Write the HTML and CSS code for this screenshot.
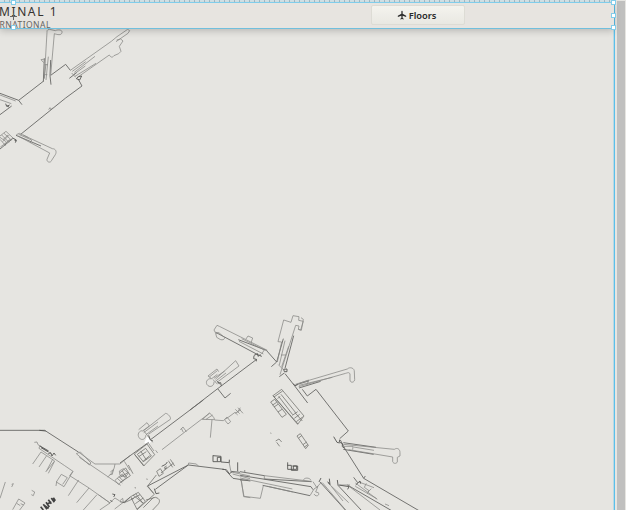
FILE: index.html
```html
<!DOCTYPE html>
<html lang="en">
<head>
<meta charset="utf-8">
<title>Terminal 1 International</title>
<link rel="stylesheet" href="styles.css">
</head>
<body>
<div class="app">
  <main class="canvas">
    <div class="ruler"></div>
    <header class="header">
      <div class="brand"><div class="terminal">MINAL 1</div><div class="subtitle">RNATIONAL</div></div>
      <button class="floors"><svg class="plane" viewBox="0 0 24 24"><path d="M10.500 3.500a1.500 1.500 0 0 1 3 0V9l8.500 5v2.500L13.500 14v5l2.500 2v1.500L12 21.500l-4 1V21l2.500-2v-5L2 16.500V14l8.500-5z"/></svg><span>Floors</span></button>
    </header>
    <svg class="map" viewBox="0 29 614 481">
      <!-- north-west pier -->
      <g transform="translate(0 20) scale(.33333)">
        <path class="wall" d="M0 220l56 21 70-54 5-4M152 166l45-33 14 18M235 178l11 20-49 36-135 109M56 241l10 13M0 284l35-26M0 387l38-31M152 120l-2 47 3 27M130 185l3-70M48 346l75 32M208 175l22-17"/>
        <path class="line" d="M133 175l8-138c-2-8 6-10 12-8l13 3c9-4 22-3 20 6-2 9-14 6-23 3l-11 125M135 117l-12 2 8 9M145 110l-7 70M138 132l-6 45M134 134h10M133 164h9M211 151l123-87 17-14 32-22 6 4-5 8-36 25M223 157l62-48M225 169l63-39M215 159l12 13M231 173l97-68c4 7 9 9 14 2l14-6 7-7-5-15 11-16-7-6-12 3M217 154l40-29M220 164l36-26M0 225l47 18M0 239l34 12M54 348l95 51-8 19c-1 10 12 11 14 3l11-17c5-9 1-18-9-18l-99-46-9 4M56 343l39 17-4 9M70 345l15 8M146 269l4-6 2 6 6-5"/>
        <path class="dark" d="M17 251l3 8 9-4M20 257l7 4M38 354l11 6-3 8M43 360l6 3M229 176l10 4 6-12-9 2z"/>
        <path class="line" d="M0 348l18-14 21 20-38 27M5 345l22 22M12 340l22 20M0 358l17 19M8 365l20-20M0 352l18 13M9 359l15-14M13 373l16-15"/>
      </g>
      <!-- north gates -->
      <g transform="translate(190 305) scale(.33333)">
        <path class="wall" d="M0 315l83-64 117-88M229 136l31 35M285 206l27 34 41 54M337 253l15 20 26-20 97 125M83 251l22 28 17-14M81 228l9 10M260 171l20-70M244 185l16-14M268 215l15-11M145 104l84 32M77 82l132 70M285 190l26-98M319 239l37-11M327 249l65-20"/>
        <path class="line" d="M232 136L88 64l-7-3-9 14 6 11c4-5 9-4 12 0l11 9c8 7-4 12-11 8l-10-6-3-12M168 102l6-9 14 6-5 15M155 101l68 34M147 109l73 38M224 133l-9 14M262 171l13-60-11-1 17-65 22 7 6-20 18 3-1 11 14 3-8 26-7-2 2-10-10-2-47 148M333 38l7 5-6 33-9-3M268 180l17-73M275 185l21-61M273 150h14M265 179l15 15M316 238l156-46c7-7 22-4 21 9l1 23c-1 10-14 10-14 1v-18c-3-7-8-3-13-2l-141 40M328 235l28-10-4 13M327 241l100-24"/>
        <path class="dark" d="M192 151l11-5 1 8 7-5 3 7M192 152l-1 9 8 2v6M281 193l10-1v8h-8zM83 234l9-1 2 10M310 236l5 6 8-3"/>
        <path class="line" d="M76 223l61-56 10 16-66 49M54 213l27-21 5 8M54 213l11 8 17-13M64 221c-15-1-19 14-10 21 8 6 19 0 18-12M68 223l14 14M72 220l32-22M58 216l24-19M76 229l32-25"/>
        <path class="line detail" d="M249 272l26-19 67 80-19 25zM249 272l75 85M252 276l26-18M266 274l42 55M273 268l44 55M263 281l7-7M307 331l16-11M313 340l16-12M319 350l19-14M315 323l22 25M242 291l12-8 35 45-13 9zM248 300l12-8M252 306l12-8M264 321l12-8"/>
      </g>
      <!-- western concourse -->
      <g transform="translate(0 420) scale(.33333)">
        <path class="wall" d="M0 31h134l101 65"/>
        <path class="dark" d="M118 31l19 2"/>
        <path class="line" d="M235 96l50 36h75l30-25M229 101l12-5 32 33-5 6zM238 112l124 84M345 132c-2 17-9 30-22 39M331 156l9-7-3 14-8 1M358 153l12-7 15 14-9 11-16-5zM373 124l17 27M345 181l22-19 10 13-22 18zM351 174l16 15M356 170l14 13M103 67l8-1 3 8 40 28M120 76l-3 9 77 52 25 17M123 96l-25 36M123 96l17 11-23 34M140 107l24 16-27 33M163 125l-18 35M158 118l-18 34M219 154l-27 46-23-14 15-23 18 10-14 20M170 185l-2 13M219 154l-10 13 58 37 28 20 34 24M236 180l-31 47M267 204l-37 44M291 224l-41 46M295 224l35 25-31 21M328 250l17-16 14 9 9-8 2 12-26 20M370 247l20-15M16 186L0 235M35 201l5-10-5 2M95 211l9 5-4 11-6-3M56 237l-18 32M56 237l19 12-16 21M62 251l9 4M50 250l11 7"/>
        <path class="dark" d="M120 78l26 15M123 83l21 12M145 101l7-3 4 10 6-9 5 7M337 222l8 2-4 7M331 240l6 6"/>
        <path class="seats" d="M145 239l9 12M154 234l9 13M138 247l10 14M130 253l11 15M122 260l8 10M143 251l11-5M134 257l12 8M160 233l6 9"/>
      </g>
      <!-- central concourse -->
      <g transform="translate(120 400) scale(.33333)">
        <path class="gap" d="M73 128l8-18 15 11-9 11z"/>
        <path class="wall" d="M0 189l86-62M93 118L250 0M83 258l122-63M106 268l99-73 107 13M0 305l13 3 18-17"/>
        <path class="line" d="M71 92l66-52c7 1 17 12 14 18l-66 45M56 89l25-21 7 10-22 16M66 92c-13 2-15 17-5 25 8 4 16-1 16-11M71 98l43-32M78 104l36-26M71 92l27 35M85 129l17 24M107 151l6 8M126 149l66-51 63-48 14-11 12 13 3 7-38-1M276 59l-5 54M269 39l-20 18M278 45l-20 13M284 60l26 2 11-11 11 14-8 7-10-12M316 58l17-12 12-9 8 8M346 28l13 13M354 23l15 17M345 40l18-11M361 23l-10 15M181 90l8-9 10 14M184 85l6 12"/>
        <path class="line detail" d="M43 162l38-30 23 32-33 34zM52 163l25-18 17 23-24 17zM62 153l17 27M56 170l23-15M68 185l21-18M44 164l29 34M0 218l17-14 14 23-29 20M7 213l15 21M0 232l24-14M25 195l14 26M110 214l11-8 9 14-13 9zM123 219l38-30M145 182l13 20M151 178l13 20M132 203l8-5M109 225l-27 34 18 20M83 258l20 25-53 47M32 290l23-13 21 27-25 24zM39 285l31 25M47 281l21 28M35 297l25-13M46 311l24-17M78 300l28-8c16 4 14 14 8 21l-16 17M101 292l-31 31M13 308l29-13M44 263l4 1M79 237l4 1"/>
        <path class="dark" d="M125 199l12-6 5-7M133 207l7-4M86 106l5 14 8 3M103 266l5 15 10-2M279 166v19h23v-13h-10v12M279 167l24 2v17l25 2v-9M353 187v27M307 208l12 1 9 12 9-6"/>
        <path class="line" d="M204 196l2-7 23 3 7 7"/>
      </g>
      <!-- south-east pier -->
      <g transform="translate(240 380) scale(.33333)">
        <path class="wall" d="M299 176l26-23M301 180l13 25 57 90 166 97M371 295l5-7M341 292l12 16M310 188l98 14M310 208l91 15M0 286l213 34 6 9M0 275l73 12M73 297l142 8M68 316l142 31M240 306l76 84M322 315l133 77M293 315l72 77"/>
        <path class="line" d="M310 193l153 15c9-6 17-1 17 10v10l-8 4v14c-3 6-12 5-14-1v-14l-132-22M310 199h29l-1 10M340 201l62 10M73 285v14M74 287l139 17M190 301c2-9 19-9 23 0M0 294l157 33M83 319l75 17M3 300l9 49 49 6 9-38M0 301h23M219 305l11 17 14-15M210 347l12-20 12-8-7 17 8 2c5 9-8 14-13 4M247 308l70 82M263 308l63 60M274 319l35 44M326 318l94 72M346 309l66 49M346 319l64 37M357 306l45 17M379 310l-6 12 14 10-5 9M435 372l12 5M383 337l11-11M299 315h31"/>
        <path class="dark" d="M281 170l10 17 8 2M299 179l-1 7 9 5v9l7 5M237 306l6-12M270 313l-7-8M268 296l2 18M294 315l-2-15M296 315l31 5-4 8M347 315l13-12 2 8M143 247v21h27v-10h-10v10M142 256h12v15h19v-13h-16M12 273h4"/>
        <path class="line detail" d="M171 168l10-7 24 35-8 10zM176 174l9-7M189 194l11-8M193 201l11-7M107 183l10-6 8 9M110 187l9 12M91 159l3 1"/>
      </g>
      <g transform="translate(120 400) scale(.33333)">
        <path class="wall" d="M317 211l22 24 52 8M333 214l27 3"/>
        <path class="line" d="M327 185l6 31 57 12M338 222l52 14M364 241l7 49 20 3"/>
      </g>
    </svg>
    <i class="handle left top"></i><i class="handle left bottom"></i><i class="crosshair"></i>
    <i class="handle right top"></i><i class="handle right middle"></i><i class="handle right bottom"></i>
  </main>
  <aside class="scrollbar"></aside>
</div>
</body>
</html>
```
FILE: styles.css
```css
* { box-sizing: border-box; }
body { margin: 0; overflow: hidden; background: #e6e5e1; font-family: "Noto Sans", sans-serif; }
.app { display: flex; width: 626px; height: 510px; }
.canvas { position: relative; width: 615px; height: 510px; border-right: 1px solid #5bbfe9; box-shadow: inset -1px 0 #b8d9e5; }
.ruler { height: 2px; background: repeating-linear-gradient(90deg, #d8e7ec 0 4px, #a8bdc7 4px 5px); }
.header { position: relative; display: flex; height: 27px; border-top: 1px solid #80cdeb; border-bottom: 1px solid #71bfdd; background: #e7e4e0; box-shadow: 0 2px 7px #0003; }
.brand { width: 371px; padding-top: 1px; white-space: nowrap; }
.terminal { height: 14px; margin-left: -1px; font-size: 12px; line-height: 15px; letter-spacing: 1.6px; color: #35322f; }
.subtitle { height: 11px; margin-left: -.5px; font-size: 8.5px; line-height: 14px; letter-spacing: .46px; color: #66635f; }
.floors { display: flex; align-items: center; justify-content: center; gap: 2px; width: 94px; height: 20px; margin-top: 2px; padding: 0 3px 0 0; border: 1px solid #dddcd5; border-radius: 2px; background: linear-gradient(#f4f3ee, #e9e8e2); color: #292929; font: 600 9.3px "Noto Sans", sans-serif; }
.plane { width: 10px; height: 10px; fill: #292929; }
.map { display: block; width: 614px; height: 481px; fill: none; }
.wall { stroke: #666664; stroke-width: 2.7; }
.line { stroke: #888885; stroke-width: 2.3; }
.detail { stroke: #70706d; }
.dark { stroke: #50504e; stroke-width: 2.6; }
.seats { stroke: #414141; stroke-width: 5; }
.gap { fill: #fff; }
.handle { position: absolute; width: 5px; height: 5px; border: 1px solid #83cdea; background: #fff; }
.left { left: 11px; }
.right { right: -2px; }
.top { top: 0; }
.middle { top: 13px; }
.bottom { top: 25px; }
.crosshair { position: absolute; left: 10px; top: 13px; width: 7px; height: 7px; background: linear-gradient(#666, #666) 50% 50% / 1px 7px no-repeat, linear-gradient(#666, #666) 50% 50% / 7px 1px no-repeat; }
.scrollbar { flex: 1; margin: 1px 1px 0 2px; background: #c0c0bf; }
```
